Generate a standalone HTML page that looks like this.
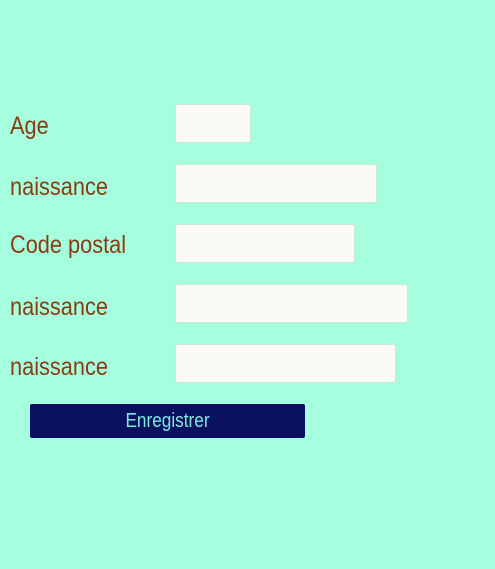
<!DOCTYPE html>
<html><head><style>
body{margin:0;width:495px;height:569px;background:#a5ffdf;font-family:"Liberation Sans",sans-serif;position:relative;overflow:hidden}
.l{position:absolute;left:10px;font-size:25px;color:#8a3b12;line-height:28px;transform:scaleX(0.87);transform-origin:0 0;white-space:nowrap}
.i{position:absolute;left:175px;background:#fbfaf5;border:1px solid #c9e6d6;border-radius:2px;box-sizing:border-box;height:39px}
.b{position:absolute;left:30px;top:404px;width:275px;height:34px;background:#0a1260;border-radius:2px}
.b span{position:absolute;left:0;right:0;text-align:center;color:#7ee8de;font-size:20px;line-height:34px;transform:scaleX(0.86)}
</style></head><body>
<div class="l" style="top:112px">Age</div><div class="i" style="top:104px;width:76px"></div>
<div class="l" style="top:173px">naissance</div><div class="i" style="top:164px;width:202px"></div>
<div class="l" style="top:231px">Code postal</div><div class="i" style="top:224px;width:180px"></div>
<div class="l" style="top:293px">naissance</div><div class="i" style="top:284px;width:233px"></div>
<div class="l" style="top:353px">naissance</div><div class="i" style="top:344px;width:221px"></div>
<div class="b"><span>Enregistrer</span></div>
</body></html>
